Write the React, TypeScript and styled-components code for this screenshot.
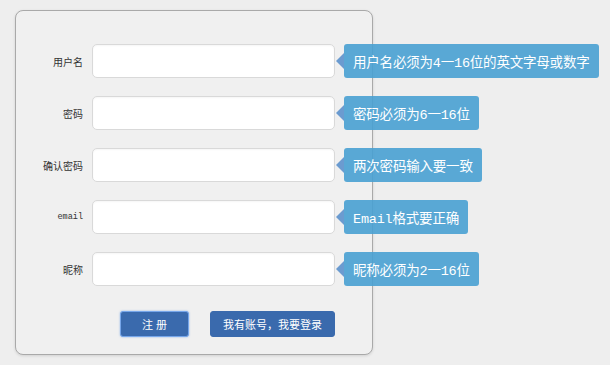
import React from "react";
import styled, { createGlobalStyle } from "styled-components";

const GlobalStyle = createGlobalStyle`
  html, body {
    margin: 0;
    padding: 0;
    background: #eeeeee;
  }
  body {
    font-family: "Liberation Mono", "Noto Sans CJK SC", monospace;
  }
`;

interface IField {
  label: string;
  tip: string;
  type?: string;
  latin?: boolean;
}

const fields: IField[] = [
  { label: "用户名", tip: "用户名必须为4一16位的英文字母或数字" },
  { label: "密码", tip: "密码必须为6一16位", type: "password" },
  { label: "确认密码", tip: "两次密码输入要一致", type: "password" },
  { label: "email", tip: "Email格式要正确", latin: true },
  { label: "昵称", tip: "昵称必须为2一16位" },
];

const App: React.FC = () => {
  return (
    <Page>
      <GlobalStyle />
      <Card>
        <Fields>
          {fields.map((f) => (
            <Row key={f.label}>
              <Label $latin={f.latin}>{f.label}</Label>
              <InputWrap>
                <Input type={f.type ?? "text"} />
                <Tip>{f.tip}</Tip>
              </InputWrap>
            </Row>
          ))}
        </Fields>
        <Actions>
          <Button $focused>注 册</Button>
          <Button>我有账号，我要登录</Button>
        </Actions>
      </Card>
    </Page>
  );
};

export default App;

const Page = styled.div`
  width: 610px;
  height: 365px;
  box-sizing: border-box;
  padding: 10px 0 0 15px;
`;

const Card = styled.div`
  box-sizing: border-box;
  width: 358px;
  height: 345px;
  padding-top: 33px;
  border: 1px solid #a9a9a9;
  border-radius: 8px;
  background: #f0f0f0;
  box-shadow: 0 1px 3px rgba(0, 0, 0, 0.12);
  display: flex;
  flex-direction: column;
`;

const Fields = styled.div`
  display: flex;
  flex-direction: column;
  gap: 18px;
`;

const Row = styled.div`
  display: flex;
  align-items: center;
  gap: 9px;
`;

const Label = styled.label<{ $latin?: boolean }>`
  width: 67px;
  text-align: right;
  font-size: ${(p) => (p.$latin ? "8.5px" : "10px")};
  color: #333;
`;

const InputWrap = styled.div`
  position: relative;
  display: flex;
`;

const Input = styled.input`
  box-sizing: border-box;
  width: 243px;
  height: 34px;
  margin: 0;
  padding: 0 8px;
  border: 1px solid #d9d9d9;
  border-radius: 5px;
  background: #fff;
  box-shadow: inset 0 1px 2px rgba(0, 0, 0, 0.04);
  outline: none;
`;

const Tip = styled.div`
  position: absolute;
  left: calc(100% + 9px);
  top: 0;
  height: 34px;
  box-sizing: border-box;
  padding: 0 9px;
  display: flex;
  align-items: center;
  white-space: nowrap;
  font-size: 13.5px;
  letter-spacing: -0.2px;
  color: #fff;
  background: rgba(72, 160, 209, 0.9);
  border-radius: 3px;

  &::before {
    content: "";
    position: absolute;
    left: -8px;
    top: 50%;
    margin-top: -8px;
    border-style: solid;
    border-width: 8px 8px 8px 0;
    border-color: transparent #6b9bd0 transparent transparent;
  }
`;

const Actions = styled.div`
  display: flex;
  gap: 21px;
  margin-top: 25px;
  padding-left: 104px;
`;

const Button = styled.button<{ $focused?: boolean }>`
  box-sizing: border-box;
  height: 26px;
  min-width: 69px;
  padding: 0 12px;
  font-family: "Liberation Sans", "Noto Sans CJK SC", sans-serif;
  font-size: 11px;
  color: #fff;
  background: #3a6aad;
  border: 1px solid ${(p) => (p.$focused ? "#76a6ea" : "#3a6aad")};
  border-radius: 3px;
  box-shadow: ${(p) => (p.$focused ? "0 0 2px rgba(90, 150, 230, 0.7)" : "none")};
  cursor: pointer;
`;
